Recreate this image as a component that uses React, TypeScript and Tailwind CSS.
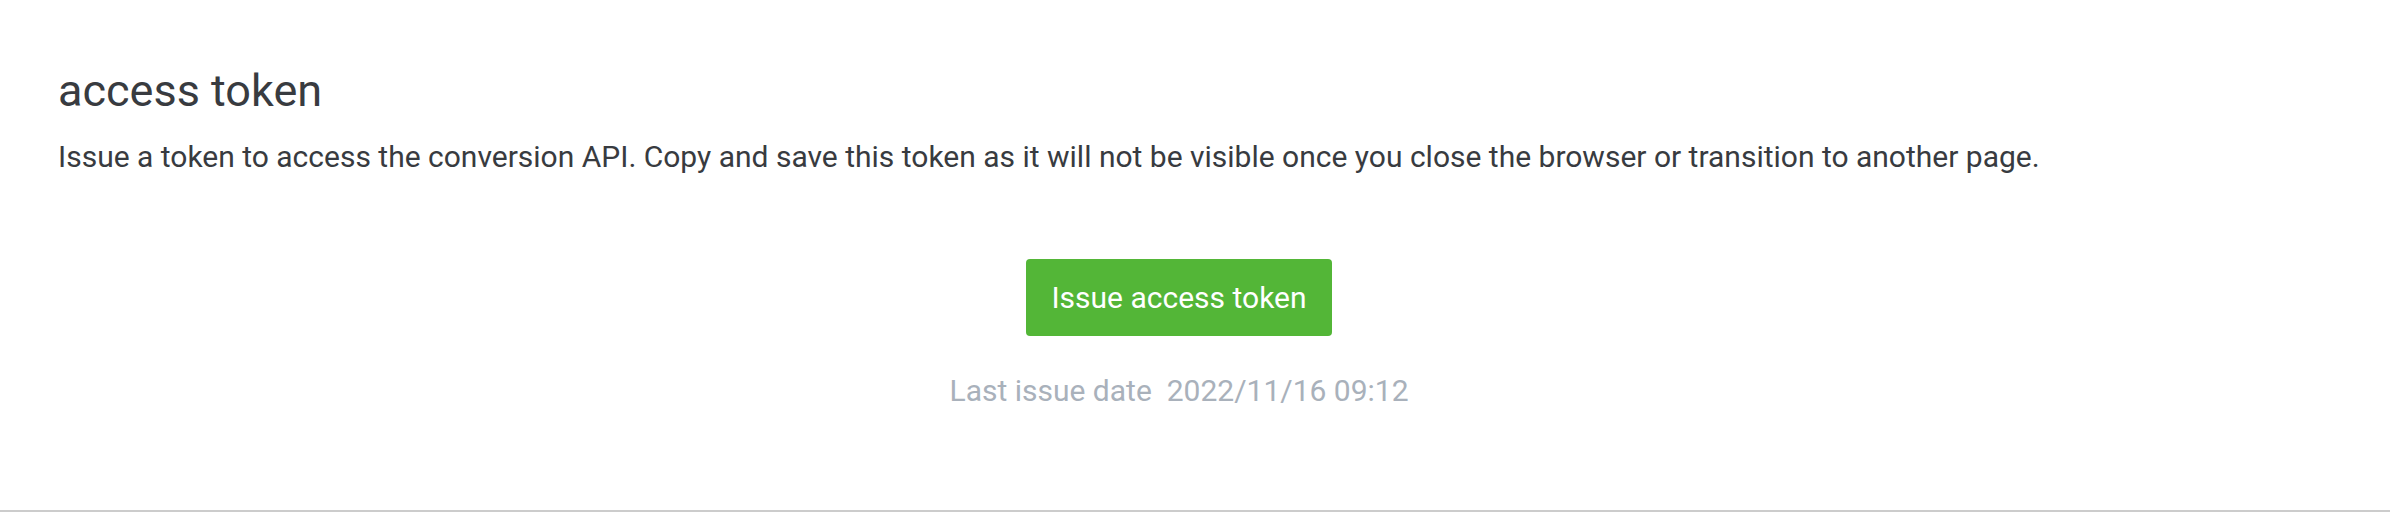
export default function App() {
  return (
    <div className="min-h-[522px] w-full bg-white" style={{ fontFamily: 'Roboto, "Noto Sans", sans-serif' }}>
      <section className="border-b-2 border-[#cccccc] pb-[104px] pl-[58px] pr-[90px] pt-[68px]">
        <h2 className="text-[45px] leading-[45px] font-normal text-[#383b40]">access token</h2>
        <p className="mt-[29px] text-[30px] leading-[30px] text-[#383b40]">
          Issue a token to access the conversion API. Copy and save this token as it will not be visible once you
          close the browser or transition to another page.
        </p>
        <div className="mt-[87px] flex flex-col items-center">
          <button
            type="button"
            className="flex h-[77px] w-[306px] items-center justify-center rounded-[4px] bg-[#53b637] text-[30px] text-white"
          >
            Issue access token
          </button>
          <p className="mt-[40px] text-[30px] leading-[30px] text-[#a9b1bb]">
            Last issue date&nbsp;&nbsp;2022/11/16 09:12
          </p>
        </div>
      </section>
    </div>
  );
}
